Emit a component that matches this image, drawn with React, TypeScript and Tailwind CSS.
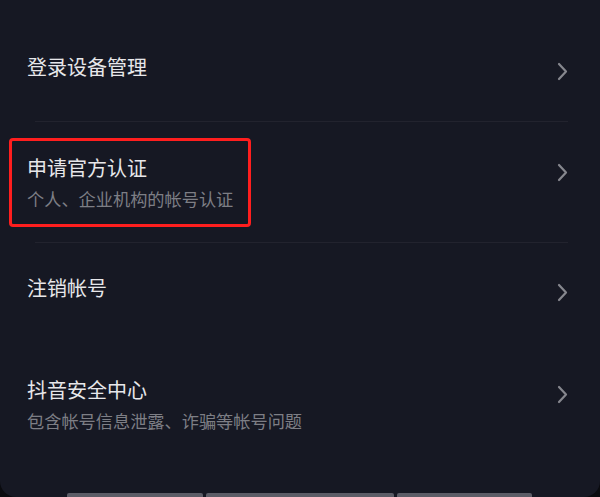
import React from "react";

const font = { fontFamily: '"Noto Sans CJK SC", "Noto Sans", sans-serif' };

function Chevron() {
  return (
    <svg width={11} height={19} viewBox="0 0 11 19" fill="none" className="mt-[9px] shrink-0">
      <path d="M2 2L9 9.5L2 17" stroke="#86878e" strokeWidth="2.2" strokeLinecap="round" strokeLinejoin="round" />
    </svg>
  );
}

function Row({ title, sub, className }: { title: string; sub?: string; className: string }) {
  return (
    <div className={`flex items-start justify-between pl-[27px] pr-[32px] ${className}`}>
      <div className="flex flex-col">
        <div className="text-[20px] leading-[28px] text-[#e7e7ea]">{title}</div>
        {sub ? <div className="mt-[5px] text-[17.2px] leading-[24px] text-[#7d7e85]">{sub}</div> : null}
      </div>
      <Chevron />
    </div>
  );
}

export default function App() {
  return (
    <div className="relative h-[497px] w-[600px] overflow-hidden bg-[#0a0b0f]" style={font}>
      <div className="flex h-full flex-col rounded-b-[16px] bg-[#161823]">
        <Row title="登录设备管理" className="pt-[53px] pb-[40px]" />
        <div className="ml-[35px] mr-[32px] h-px bg-[#22232e]" />
        <Row title="申请官方认证" sub="个人、企业机构的帐号认证" className="pt-[32px] pb-[31px]" />
        <div className="ml-[35px] mr-[32px] h-px bg-[#22232e]" />
        <Row title="注销帐号" className="pt-[31px] pb-[37px]" />
        <Row title="抖音安全中心" sub="包含帐号信息泄露、诈骗等帐号问题" className="pt-[37px]" />
      </div>

      {/* annotation box */}
      <div className="absolute left-[9px] top-[138px] h-[89px] w-[242px] rounded-[4px] border-[3px] border-[#ff1e1e]" />

      {/* bottom tabs peeking */}
      <div className="absolute bottom-0 left-[67px] flex gap-[3px]">
        <div className="h-[4px] w-[136px] rounded-t-[2px] bg-[#5c5d67]" />
        <div className="h-[4px] w-[188px] rounded-t-[2px] bg-[#5c5d67]" />
        <div className="h-[4px] w-[135px] rounded-t-[2px] bg-[#5c5d67]" />
      </div>
    </div>
  );
}
